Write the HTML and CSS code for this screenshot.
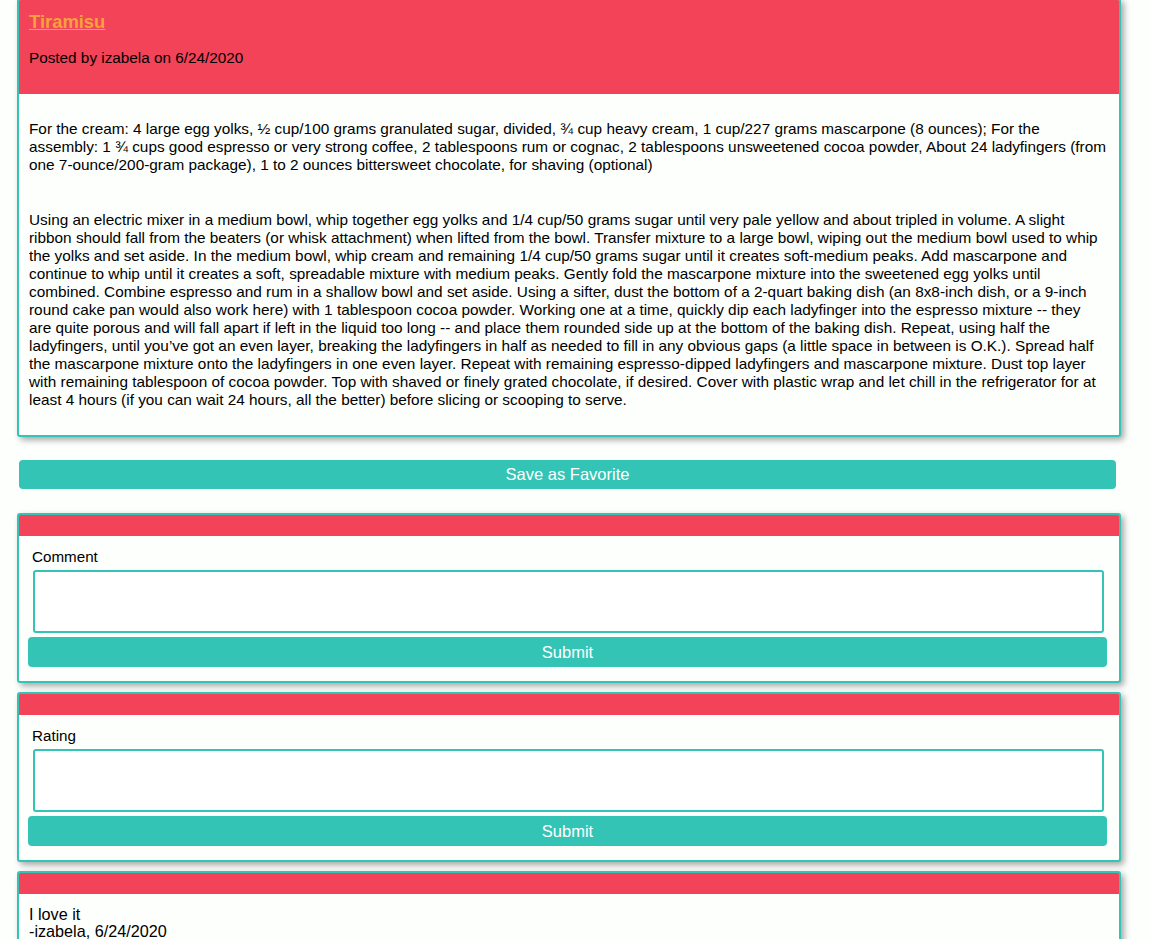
FILE: index.html
```html
<!DOCTYPE html>
<html lang="en">
<head>
<meta charset="utf-8">
<title>Tiramisu</title>
<link rel="stylesheet" href="styles.css">
</head>
<body>
<main class="page">
  <article class="card recipe">
    <header class="card-head recipe-head">
      <a class="recipe-title" href="#">Tiramisu</a>
      <p class="posted">Posted by izabela on 6/24/2020</p>
    </header>
    <div class="recipe-body">
      <p class="ingredients">For the cream: 4 large egg yolks, ½ cup/100 grams granulated sugar, divided, ¾ cup heavy cream, 1 cup/227 grams mascarpone (8 ounces); For the assembly: 1 ¾ cups good espresso or very strong coffee, 2 tablespoons rum or cognac, 2 tablespoons unsweetened cocoa powder, About 24 ladyfingers (from one 7-ounce/200-gram package), 1 to 2 ounces bittersweet chocolate, for shaving (optional)</p>
      <p class="steps">Using an electric mixer in a medium bowl, whip together egg yolks and 1/4 cup/50 grams sugar until very pale yellow and about tripled in volume. A slight ribbon should fall from the beaters (or whisk attachment) when lifted from the bowl. Transfer mixture to a large bowl, wiping out the medium bowl used to whip the yolks and set aside. In the medium bowl, whip cream and remaining 1/4 cup/50 grams sugar until it creates soft-medium peaks. Add mascarpone and continue to whip until it creates a soft, spreadable mixture with medium peaks. Gently fold the mascarpone mixture into the sweetened egg yolks until combined. Combine espresso and rum in a shallow bowl and set aside. Using a sifter, dust the bottom of a 2-quart baking dish (an 8x8-inch dish, or a 9-inch round cake pan would also work here) with 1 tablespoon cocoa powder. Working one at a time, quickly dip each ladyfinger into the espresso mixture -- they are quite porous and will fall apart if left in the liquid too long -- and place them rounded side up at the bottom of the baking dish. Repeat, using half the ladyfingers, until you’ve got an even layer, breaking the ladyfingers in half as needed to fill in any obvious gaps (a little space in between is O.K.). Spread half the mascarpone mixture onto the ladyfingers in one even layer. Repeat with remaining espresso-dipped ladyfingers and mascarpone mixture. Dust top layer with remaining tablespoon of cocoa powder. Top with shaved or finely grated chocolate, if desired. Cover with plastic wrap and let chill in the refrigerator for at least 4 hours (if you can wait 24 hours, all the better) before slicing or scooping to serve.</p>
    </div>
  </article>

  <button class="btn btn-fav" type="button">Save as Favorite</button>

  <form class="card form-card">
    <div class="card-head"></div>
    <div class="form-body">
      <label class="field-label" for="comment">Comment</label>
      <textarea class="field" id="comment"></textarea>
      <button class="btn btn-submit" type="button">Submit</button>
    </div>
  </form>

  <form class="card form-card">
    <div class="card-head"></div>
    <div class="form-body">
      <label class="field-label" for="rating">Rating</label>
      <textarea class="field" id="rating"></textarea>
      <button class="btn btn-submit" type="button">Submit</button>
    </div>
  </form>

  <article class="card comment">
    <div class="card-head"></div>
    <div class="comment-body">
      <div>I love it</div>
      <div>-izabela, 6/24/2020</div>
    </div>
  </article>
</main>
</body>
</html>
```

FILE: styles.css
```css
html, body {
  margin: 0;
  padding: 0;
  background: #fdfffc;
}

body {
  font-family: "Liberation Sans", Arial, Helvetica, sans-serif;
  color: #000;
  overflow: hidden;
}

.page {
  width: 1104px;
  padding-left: 17px;
  display: flex;
  flex-direction: column;
}

.card {
  border: 2px solid #34c4b5;
  border-radius: 3px;
  background: #fdfffc;
  box-shadow: 3px 3px 6px rgba(0, 0, 0, 0.35);
  overflow: hidden;
}

.card-head {
  background: #f24359;
  height: 21px;
}

.recipe {
  margin-top: -2px;
}

.recipe-head {
  height: auto;
  padding: 11px 10px 27px;
}

.recipe-title {
  display: block;
  font-size: 18.4px;
  line-height: 22px;
  font-weight: bold;
  color: #f8a13c;
  text-decoration: underline;
}

.posted {
  margin: 16px 0 0;
  font-size: 15.3px;
  line-height: 18px;
}

.recipe-body {
  padding: 26px 10px 26px;
  display: flex;
  flex-direction: column;
  gap: 37px;
  font-size: 15.35px;
  line-height: 18px;
}

.recipe-body p {
  margin: 0;
}

.recipe-body .steps {
  padding-right: 5px;
}

.btn {
  border: none;
  border-radius: 4px;
  background: #34c4b5;
  color: #fff;
  font-family: "Liberation Sans", Arial, Helvetica, sans-serif;
  font-size: 16.5px;
  padding: 0;
  cursor: pointer;
}

.btn-fav {
  margin: 23px 0 24px 2px;
  width: 1097px;
  height: 29px;
}

.form-card {
  margin: 0 0 9px;
}

.form-body {
  padding: 12px 12px 14px 9px;
  display: flex;
  flex-direction: column;
}

.field-label {
  font-size: 15.2px;
  line-height: 18px;
  margin-left: 4px;
}

.field {
  box-sizing: border-box;
  margin: 4px 3px 0 5px;
  height: 63px;
  border: 2px solid #34c4b5;
  border-radius: 3px;
  background: #fff;
  resize: none;
  outline: none;
}

.btn-submit {
  margin-top: 4px;
  height: 30px;
}

.comment-body {
  padding: 12px 10px 20px;
  font-size: 16.2px;
  line-height: 17px;
}
```
